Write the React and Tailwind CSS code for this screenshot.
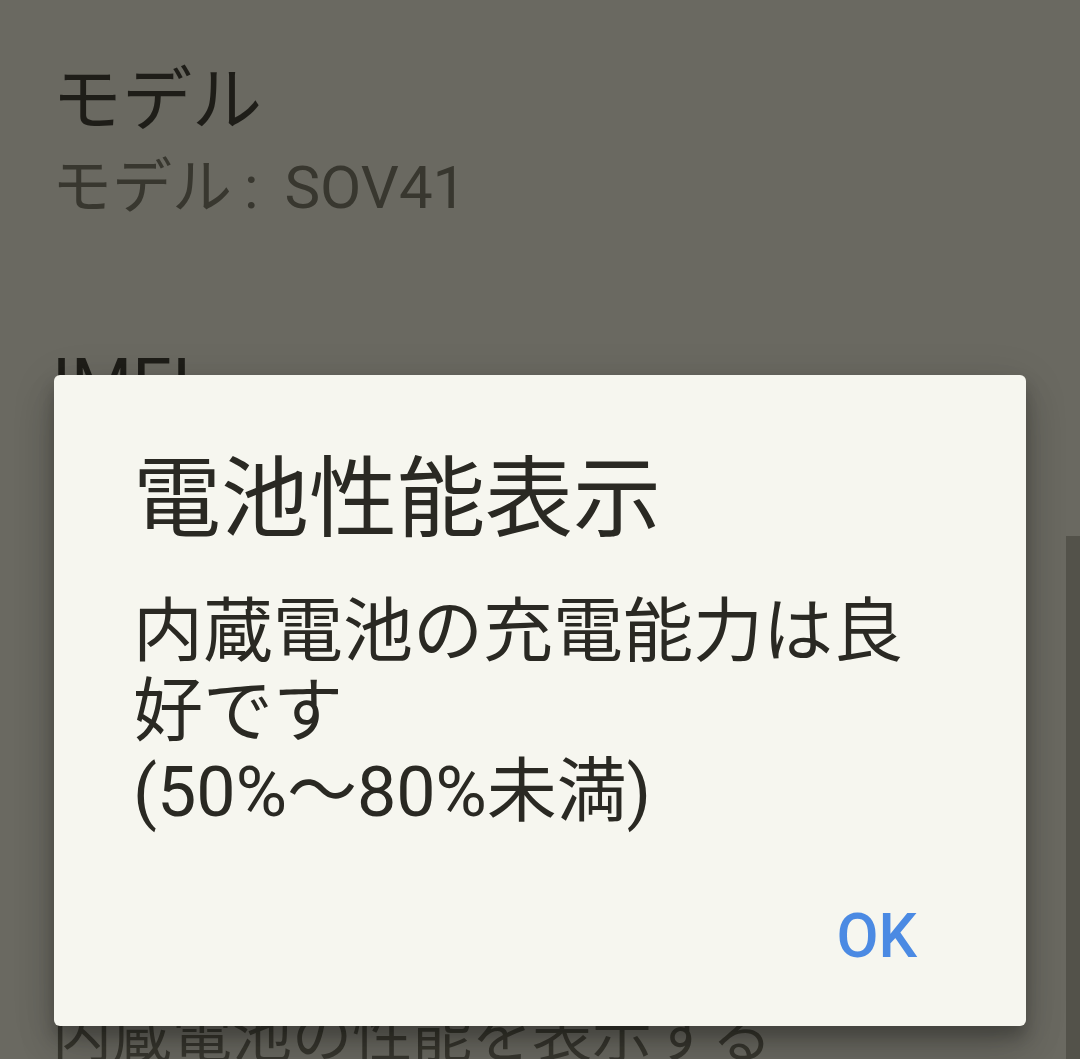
import React from 'react';

const font = { fontFamily: 'Roboto, "Noto Sans CJK JP", sans-serif' };

const items = [
  { title: 'モデル', summary: <>モデル<span className="ml-[12px]">:</span><span className="ml-[11px]"> SOV41</span></> },
  { title: 'IMEI', summary: '358123456789012' },
  { title: 'ソフトウェア情報', summary: 'ビルド番号など' },
  { title: '電池性能表示', summary: '内蔵電池の性能を表示する' },
];

const PrefRow = ({ title, summary }) => (
  <div className="px-[52px] py-[59px]">
    <div className="text-[70px] leading-[84px] text-[#1e1d18] whitespace-nowrap">{title}</div>
    <div className="mt-[9px] text-[60px] leading-[72px] text-[#38372f] whitespace-nowrap">{summary}</div>
  </div>
);

export default function App() {
  return (
    <div style={font} className="relative w-[1080px] h-[1059px] overflow-hidden bg-[#6a6961]">
      <div className="flex flex-col">
        {items.map(item => (
          <PrefRow key={item.title} title={item.title} summary={item.summary} />
        ))}
      </div>

      {/* scrollbar */}
      <div className="absolute right-0 top-[536px] w-[14px] h-[600px] bg-[#53524a]"></div>

      {/* dialog */}
      <div className="absolute left-[54px] top-[375px] w-[972px] h-[651px] rounded-[6px] bg-[#f6f6ef] flex flex-col shadow-[0_24px_38px_rgba(0,0,0,0.14),0_9px_46px_rgba(0,0,0,0.12),0_11px_15px_rgba(0,0,0,0.2)]">
        <div className="pl-[79px] pr-[80px] pt-[71px]">
          <h2 className="text-[88px] leading-[106px] text-[#2a2923] font-normal">電池性能表示</h2>
          <p className="mt-[40px] text-[70px] leading-[80px] text-[#2a2923]">
            内蔵電池の充電能力は良好です
            <br />
            (50%〜80%未満)
          </p>
        </div>
        <div className="mt-auto flex justify-end pr-[109px] pb-[54px]">
          <button className="text-[61px] leading-[72px] font-medium text-[#4b8ae3]">OK</button>
        </div>
      </div>
    </div>
  );
}
